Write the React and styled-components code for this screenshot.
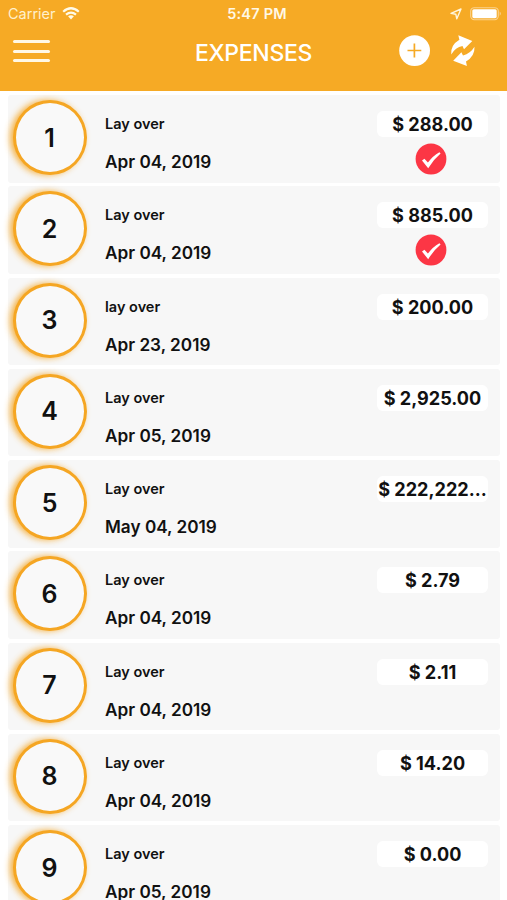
import styled, { createGlobalStyle } from "styled-components";

const expenses = [
  { title: "Lay over", date: "Apr 04, 2019", amount: "$ 288.00", approved: true },
  { title: "Lay over", date: "Apr 04, 2019", amount: "$ 885.00", approved: true },
  { title: "lay over", date: "Apr 23, 2019", amount: "$ 200.00" },
  { title: "Lay over", date: "Apr 05, 2019", amount: "$ 2,925.00" },
  { title: "Lay over", date: "May 04, 2019", amount: "$ 222,222..." },
  { title: "Lay over", date: "Apr 04, 2019", amount: "$ 2.79" },
  { title: "Lay over", date: "Apr 04, 2019", amount: "$ 2.11" },
  { title: "Lay over", date: "Apr 04, 2019", amount: "$ 14.20" },
  { title: "Lay over", date: "Apr 05, 2019", amount: "$ 0.00" },
];

export default function App() {
  return (
    <Screen>
      <GlobalStyle />
      <Header>
        <StatusBar>
          <Carrier>
            <span>Carrier</span>
            <WifiIcon />
          </Carrier>
          <Time>5:47 PM</Time>
          <Indicators>
            <LocationIcon />
            <BatteryIcon />
          </Indicators>
        </StatusBar>
        <NavBar>
          <MenuButton aria-label="Menu">
            <MenuLine />
            <MenuLine />
            <MenuLine />
          </MenuButton>
          <Title>EXPENSES</Title>
          <Actions>
            <IconButton aria-label="Add expense">
              <AddIcon />
            </IconButton>
            <IconButton aria-label="Refresh">
              <RefreshIcon />
            </IconButton>
          </Actions>
        </NavBar>
      </Header>
      <List>
        {expenses.map((item, i) => (
          <Row key={i}>
            <Badge>{i + 1}</Badge>
            <Details>
              <Name>{item.title}</Name>
              <ExpenseDate>{item.date}</ExpenseDate>
            </Details>
            <Side>
              <Amount>{item.amount}</Amount>
              {item.approved && <CheckIcon />}
            </Side>
          </Row>
        ))}
      </List>
    </Screen>
  );
}

function WifiIcon() {
  return (
    <svg width="18" height="13" viewBox="0 0 18 13" fill="none" stroke="#fffbe8" strokeWidth="2.2">
      <path d="M1.2 4.7 Q9 -2.2 16.8 4.7" />
      <path d="M4 7.7 Q9 3.4 14 7.7" />
      <path d="M6.1 9.3 Q9 7.1 11.9 9.3 L9 12.4 Z" fill="#fffbe8" stroke="none" />
    </svg>
  );
}

function LocationIcon() {
  return (
    <svg width="12" height="12" viewBox="0 0 12 12" fill="none" stroke="#fff6dc" strokeWidth="1.4" strokeLinejoin="round">
      <path d="M1 5.4 L11 1 L6.8 10.8 L5.8 6.2 Z" />
    </svg>
  );
}

function BatteryIcon() {
  return (
    <svg width="32" height="14" viewBox="0 0 32 14">
      <rect x="0.7" y="0.7" width="27.6" height="12" rx="3.6" fill="none" stroke="#fbd28d" strokeWidth="1.1" />
      <rect x="2.3" y="2.2" width="24.4" height="9" rx="1.6" fill="#fff" />
      <path d="M29.7 4.6 Q32 6.7 29.7 8.8 Z" fill="#fbd28d" />
    </svg>
  );
}

function AddIcon() {
  return (
    <svg width="32" height="32" viewBox="0 0 32 32">
      <circle cx="15.6" cy="15.6" r="15.4" fill="#fff" />
      <path d="M15.4 8.6 V22.4 M8.5 15.5 H22.3" stroke="#f6aa25" strokeWidth="1.7" />
    </svg>
  );
}

function RefreshIcon() {
  return (
    <svg width="26" height="32" viewBox="0 0 26 32" fill="#fff">
      <path d="M8.3 0.3 L22.3 5.9 L14 14.2 L12.5 11 Q5.4 12.2 1.2 19.6 Q0.4 10 9.4 4.8 Z" />
      <path d="M16.9 31 L3.2 25.7 L11.4 17.2 L13 20.6 Q20.4 18.6 24.5 11.8 Q25 21.2 16 26.6 Z" />
    </svg>
  );
}

function CheckIcon() {
  return (
    <svg width="32" height="32" viewBox="0 0 32 32">
      <circle cx="16" cy="16" r="15.4" fill="#fc3645" />
      <path d="M7 17.6 L9.4 15.8 L12.9 19.6 Q17.8 12.8 24.4 9.2 L25.6 10.6 Q18.5 16.6 13.2 25.2 Z" fill="#fff" />
    </svg>
  );
}

const GlobalStyle = createGlobalStyle`
  * {
    box-sizing: border-box;
  }

  body {
    margin: 0;
    background: #fff;
    font-family: Inter, "Liberation Sans", sans-serif;
    color: #111;
  }
`;

const Screen = styled.div`
  height: 900px;
  overflow: hidden;
`;

const Header = styled.header`
  height: 91px;
  background: #f6aa25;
  color: #fff;
`;

const StatusBar = styled.div`
  display: grid;
  grid-template-columns: 1fr auto 1fr;
  align-items: center;
  height: 27px;
  padding: 0 5px 0 8px;
`;

const Carrier = styled.div`
  display: flex;
  align-items: center;
  gap: 6px;
  font-size: 14.5px;
  color: #fff0cc;
`;

const Time = styled.div`
  margin-left: 4px;
  font-size: 14.5px;
  font-weight: 600;
  letter-spacing: 0.2px;
  color: #fff8e6;
`;

const Indicators = styled.div`
  display: flex;
  align-items: center;
  justify-content: flex-end;
  gap: 8px;
`;

const NavBar = styled.div`
  display: grid;
  grid-template-columns: 1fr auto 1fr;
  align-items: center;
  height: 48px;
  padding: 0 31px;
`;

const MenuButton = styled.button`
  display: flex;
  flex-direction: column;
  gap: 6.4px;
  width: 37px;
  margin-left: -18px;
  padding: 0;
  border: 0;
  background: none;
`;

const MenuLine = styled.span`
  height: 3px;
  border-radius: 2px;
  background: #fff8e6;
`;

const Title = styled.h1`
  margin: 3px 0 0;
  font-size: 23px;
  line-height: 28px;
  font-weight: 450;
  letter-spacing: -0.3px;
`;

const Actions = styled.div`
  display: flex;
  justify-content: flex-end;
  gap: 19px;
`;

const IconButton = styled.button`
  display: flex;
  padding: 0;
  border: 0;
  background: none;
`;

const List = styled.main`
  display: flex;
  flex-direction: column;
  gap: 3.75px;
  padding: 4px 7px 0 8px;
`;

const Row = styled.article`
  display: flex;
  flex-shrink: 0;
  height: 87.5px;
  padding: 5px 12px 0 5px;
  border-radius: 3px;
  background: #f7f7f7;
`;

const Badge = styled.div`
  display: flex;
  align-items: center;
  justify-content: center;
  width: 74px;
  height: 75px;
  padding-right: 1px;
  border: 3px solid #f5a623;
  border-radius: 50%;
  background: #f9f9f9;
  box-shadow: -3px 0 6px rgba(245, 166, 35, 0.85);
  font-size: 25px;
  font-weight: 600;
`;

const Details = styled.div`
  display: flex;
  flex: 1;
  flex-direction: column;
  gap: 18px;
  padding: 14px 0 0 18px;
`;

const Name = styled.div`
  font-size: 14.5px;
  line-height: 20px;
  font-weight: 600;
`;

const ExpenseDate = styled.div`
  font-size: 17.2px;
  line-height: 20px;
  font-weight: 600;
`;

const Side = styled.div`
  display: flex;
  flex-direction: column;
  align-items: center;
  gap: 6px;
  width: 111px;
  padding-top: 11px;

  svg {
    margin-right: 4px;
  }
`;

const Amount = styled.div`
  width: 111px;
  height: 26px;
  border-radius: 6px;
  background: #fff;
  font-size: 18.1px;
  line-height: 26px;
  font-weight: 700;
  text-align: center;
  white-space: nowrap;
`;
